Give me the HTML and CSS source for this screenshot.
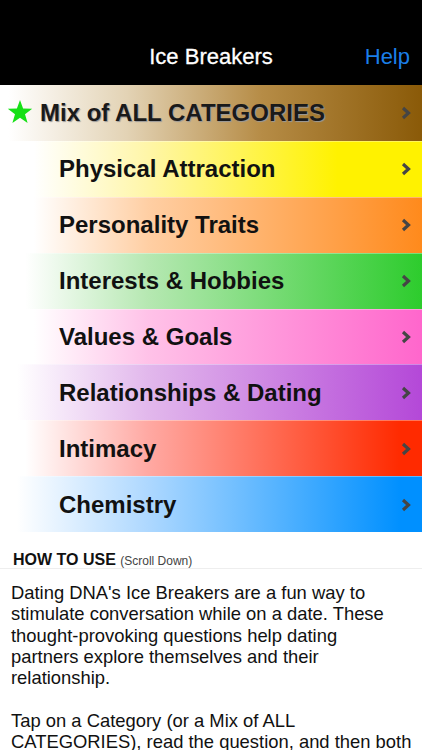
FILE: index.html
```
<!DOCTYPE html>
<html lang="en">
<head>
  <meta charset="utf-8">
  <title>Ice Breakers</title>
  <link rel="stylesheet" href="styles.css">
</head>
<body>
  <div class="navbar">
    <div class="title">Ice Breakers</div>
    <div class="help">Help</div>
  </div>

  <ul class="categories">
    <li class="cat mix">
      <svg class="star" viewBox="0 0 26 26" width="26" height="26"><polygon points="13,1 16.1,9.6 25.2,9.8 18,15.3 20.6,24 13,18.8 5.4,24 8,15.3 0.8,9.8 9.9,9.6" fill="#16e016"/></svg>
      <span class="name">Mix of ALL CATEGORIES</span>
      <svg class="chev" viewBox="0 0 10 14" width="10" height="14"><polyline points="2,2 7.5,7 2,12" fill="none" stroke="#454545" stroke-width="3.2"/></svg>
    </li>
    <li class="cat physical"><span class="name">Physical Attraction</span><svg class="chev" viewBox="0 0 10 14" width="10" height="14"><polyline points="2,2 7.5,7 2,12" fill="none" stroke="#454545" stroke-width="3.2"/></svg></li>
    <li class="cat personality"><span class="name">Personality Traits</span><svg class="chev" viewBox="0 0 10 14" width="10" height="14"><polyline points="2,2 7.5,7 2,12" fill="none" stroke="#454545" stroke-width="3.2"/></svg></li>
    <li class="cat interests"><span class="name">Interests &amp; Hobbies</span><svg class="chev" viewBox="0 0 10 14" width="10" height="14"><polyline points="2,2 7.5,7 2,12" fill="none" stroke="#454545" stroke-width="3.2"/></svg></li>
    <li class="cat values"><span class="name">Values &amp; Goals</span><svg class="chev" viewBox="0 0 10 14" width="10" height="14"><polyline points="2,2 7.5,7 2,12" fill="none" stroke="#454545" stroke-width="3.2"/></svg></li>
    <li class="cat relationships"><span class="name">Relationships &amp; Dating</span><svg class="chev" viewBox="0 0 10 14" width="10" height="14"><polyline points="2,2 7.5,7 2,12" fill="none" stroke="#454545" stroke-width="3.2"/></svg></li>
    <li class="cat intimacy"><span class="name">Intimacy</span><svg class="chev" viewBox="0 0 10 14" width="10" height="14"><polyline points="2,2 7.5,7 2,12" fill="none" stroke="#454545" stroke-width="3.2"/></svg></li>
    <li class="cat chemistry"><span class="name">Chemistry</span><svg class="chev" viewBox="0 0 10 14" width="10" height="14"><polyline points="2,2 7.5,7 2,12" fill="none" stroke="#454545" stroke-width="3.2"/></svg></li>
  </ul>

  <div class="howto-head"><b>HOW TO USE</b> <small>(Scroll Down)</small></div>
  <div class="howto">
    <p class="intro">Dating DNA's Ice Breakers are a fun way to stimulate conversation while on a date. These thought-provoking questions help dating partners explore themselves and their relationship.</p>
    <p>Tap on a Category (or a Mix of ALL CATEGORIES), read the question, and then both</p>
  </div>
</body>
</html>
```

FILE: styles.css
```
html, body {
  margin: 0;
  padding: 0;
  height: 100%;
  overflow: hidden;
}
body {
  font-family: "Liberation Sans", Arial, Helvetica, sans-serif;
  background-color: #fff;
  color: #000;
}
.navbar {
  height: 85px;
  background-color: #000;
  display: flex;
  align-items: flex-end;
  justify-content: center;
  position: relative;
  box-sizing: border-box;
  padding-bottom: 16px;
}
.title {
  color: #fff;
  font-size: 22px;
  line-height: 24px;
  -webkit-text-stroke: 0.3px #fff;
}
.help {
  position: absolute;
  right: 12px;
  bottom: 16px;
  color: #1b7fe9;
  font-size: 22px;
  line-height: 24px;
}
.categories {
  list-style: none;
  margin: 0;
  padding: 0;
}
.cat {
  height: 55.9px;
  display: flex;
  align-items: center;
  padding-left: 59px;
  padding-right: 11px;
  box-sizing: border-box;
  border-top: 1px solid rgba(255,255,255,0.35);
}
.cat .name {
  flex: 1;
  font-size: 24px;
  font-weight: bold;
  color: #111;
}
.chev {
  display: block;
}
.mix {
  padding-left: 7px;
  border-top: 0;
  background: linear-gradient(to right, #fff 2%, #e3d3b5 30%, #b68c46 62%, #8a5a08 100%);
}
.mix .star {
  margin-right: 7px;
  margin-top: -2px;
}
.mix .name {
  color: #1a1a1a;
  text-shadow: 1px 1px 1px #999;
}
.physical { background: linear-gradient(to right, #fff 8%, #fff6a8 35%, #fff200 80%); }
.personality { background: linear-gradient(to right, #fff 8%, #ffcfa4 35%, #ff8a1c 100%); }
.interests { background: linear-gradient(to right, #fff 6%, #b6e8b2 35%, #2dcc2d 100%); }
.values { background: linear-gradient(to right, #fff 8%, #ffc2e8 35%, #ff66cc 100%); }
.relationships { background: linear-gradient(to right, #fff 4%, #e2b8ec 35%, #b448d8 100%); }
.intimacy { background: linear-gradient(to right, #fff 6%, #ffa9a3 35%, #ff2a00 95%); }
.chemistry { background: linear-gradient(to right, #fff 4%, #aed8ff 35%, #0090ff 95%); }
.howto-head {
  height: 37px;
  box-sizing: border-box;
  padding: 19px 0 0 13px;
  border-bottom: 1px solid #eee;
  font-size: 16px;
  line-height: 18px;
  color: #111;
}
.howto-head small {
  font-size: 12px;
  color: #444;
}
.howto {
  padding: 13px 4px 0 11px;
  font-size: 18.4px;
  line-height: 21.3px;
  color: #111;
}
.howto p {
  margin: 0 0 21.3px 0;
}
.howto .intro {
  padding-right: 26px;
}
```
